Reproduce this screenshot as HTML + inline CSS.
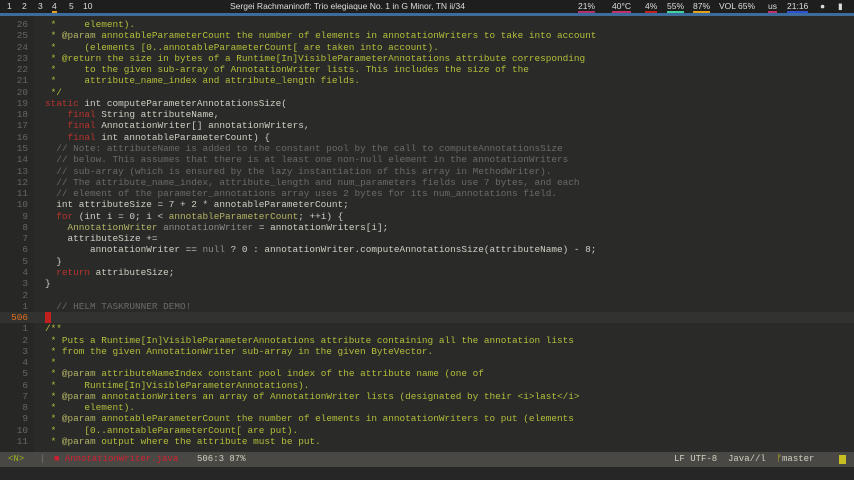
<!DOCTYPE html>
<html><head><meta charset="utf-8"><style>
body{margin:0;width:854px;height:480px;background:#2a2a29;overflow:hidden;position:relative;font-family:"Liberation Mono",monospace;}
#top{position:absolute;left:0;top:0;width:854px;height:13px;background:#1e1e1e;font-family:"Liberation Sans",sans-serif;font-size:8.5px;color:#ddd;}
#top span{position:absolute;top:1px}
#blue{position:absolute;left:0;top:13px;width:854px;height:3px;background:#3e6c9a;}
#gut{position:absolute;left:0;top:16px;width:34px;height:436px;background:#272726;}
.l{position:absolute;left:0;height:11px;font-size:9.4px;line-height:11px;white-space:pre;}
.n{position:absolute;left:0;width:28px;text-align:right;color:#666;}
.c{position:absolute;left:45px;color:#cfcfc4;}
.d{color:#b4be3a}.k{color:#b8332e}.g{color:#6a6a66}.t{color:#8b8b86}.p{color:#b4b466}
#status{position:absolute;left:0;top:452px;width:854px;height:15px;background:#4a4844;font-size:9px;line-height:15px;color:#cfcfc0;white-space:pre;}
#bot{position:absolute;left:0;top:467px;width:854px;height:13px;background:#262626;}
</style></head><body>
<div id="top">
<span style="left:7px">1</span><span style="left:22px">2</span><span style="left:38px">3</span><span style="left:52px;border-bottom:2px solid #e8a020">4</span><span style="left:69px">5</span><span style="left:83px">10</span>
<span style="left:230px">Sergei Rachmaninoff: Trio elegiaque No. 1 in G Minor, TN ii/34</span>
<span style="left:578px;border-bottom:2px solid #b0306a">21%</span>
<span style="left:612px;border-bottom:2px solid #c0306a">40°C</span>
<span style="left:645px;border-bottom:2px solid #c02020">4%</span>
<span style="left:667px;border-bottom:2px solid #40d0a0">55%</span>
<span style="left:693px;border-bottom:2px solid #e0a020">87%</span>
<span style="left:719px">VOL 65%</span>
<span style="left:768px;border-bottom:2px solid #c0306a">us</span>
<span style="left:787px;border-bottom:2px solid #3050d0">21:16</span>
<span style="left:820px">●</span><span style="left:838px">▮</span>
</div>
<div id="blue"></div>
<div id="gut"></div>
<div id="code"></div>
<div id="status"><span style="position:absolute;left:8px;color:#9ab020">&lt;N&gt;</span><span style="position:absolute;left:40px;color:#777">|</span><span style="position:absolute;left:54px;color:#d02030">■ AnnotationWriter.java</span><span style="position:absolute;left:197px">506:3 87%</span><span style="position:absolute;left:674px">LF UTF-8  Java//l  <span style="color:#c8c020">ᚠ</span>master</span><span style="position:absolute;left:839px;top:3px;width:7px;height:9px;background:#c8c020"></span></div>
<div id="bot"></div>
<script>
var L=[
["26",'<span class="d"> *     element).</span>'],
["25",'<span class="d"> * <span class="p">@param</span> annotableParameterCount the number of elements in annotationWriters to take into account</span>'],
["24",'<span class="d"> *     (elements [0..annotableParameterCount[ are taken into account).</span>'],
["23",'<span class="d"> * @return the size in bytes of a Runtime[In]VisibleParameterAnnotations attribute corresponding</span>'],
["22",'<span class="d"> *     to the given sub-array of AnnotationWriter lists. This includes the size of the</span>'],
["21",'<span class="d"> *     attribute_name_index and attribute_length fields.</span>'],
["20",'<span class="d"> */</span>'],
["19",'<span class="k">static</span> int computeParameterAnnotationsSize('],
["18",'    <span class="k">final</span> String attributeName,'],
["17",'    <span class="k">final</span> AnnotationWriter[] annotationWriters,'],
["16",'    <span class="k">final</span> int annotableParameterCount) {'],
["15",'  <span class="g">// Note: attributeName is added to the constant pool by the call to computeAnnotationsSize</span>'],
["14",'  <span class="g">// below. This assumes that there is at least one non-null element in the annotationWriters</span>'],
["13",'  <span class="g">// sub-array (which is ensured by the lazy instantiation of this array in MethodWriter).</span>'],
["12",'  <span class="g">// The attribute_name_index, attribute_length and num_parameters fields use 7 bytes, and each</span>'],
["11",'  <span class="g">// element of the parameter_annotations array uses 2 bytes for its num_annotations field.</span>'],
["10",'  int attributeSize = 7 + 2 * annotableParameterCount;'],
["9",'  <span class="k">for</span> (int i = 0; i &lt; <span class="p">annotableParameterCount</span>; ++i) {'],
["8",'    <span class="p">AnnotationWriter</span> <span class="t">annotationWriter</span> = annotationWriters[i];'],
["7",'    attributeSize +='],
["6",'        annotationWriter == <span class="t">null</span> ? 0 : annotationWriter.computeAnnotationsSize(attributeName) - 8;'],
["5",'  }'],
["4",'  <span class="k">return</span> attributeSize;'],
["3",'}'],
["2",''],
["1",'  <span class="g">// HELM TASKRUNNER DEMO!</span>'],
["506",'<span style="background:#c02020;color:#c02020">|</span>'],
["1",'<span class="d">/**</span>'],
["2",'<span class="d"> * Puts a Runtime[In]VisibleParameterAnnotations attribute containing all the annotation lists</span>'],
["3",'<span class="d"> * from the given AnnotationWriter sub-array in the given ByteVector.</span>'],
["4",'<span class="d"> *</span>'],
["5",'<span class="d"> * <span class="p">@param</span> attributeNameIndex constant pool index of the attribute name (one of</span>'],
["6",'<span class="d"> *     Runtime[In]VisibleParameterAnnotations).</span>'],
["7",'<span class="d"> * <span class="p">@param</span> annotationWriters an array of AnnotationWriter lists (designated by their &lt;i&gt;last&lt;/i&gt;</span>'],
["8",'<span class="d"> *     element).</span>'],
["9",'<span class="d"> * <span class="p">@param</span> annotableParameterCount the number of elements in annotationWriters to put (elements</span>'],
["10",'<span class="d"> *     [0..annotableParameterCount[ are put).</span>'],
["11",'<span class="d"> * <span class="p">@param</span> output where the attribute must be put.</span>']
];
var h='';
for(var i=0;i<L.length;i++){var t=19+i*11.27;var cur=L[i][0]=="506";
h+='<div class="l" style="top:'+t.toFixed(1)+'px;width:854px;'+(cur?'background:#323230;':'')+'"><span class="n" style="'+(cur?'color:#e07020':'')+'">'+L[i][0]+'</span><span class="c">'+L[i][1]+'</span></div>';}
document.getElementById('code').innerHTML=h;
</script>
</body></html>
